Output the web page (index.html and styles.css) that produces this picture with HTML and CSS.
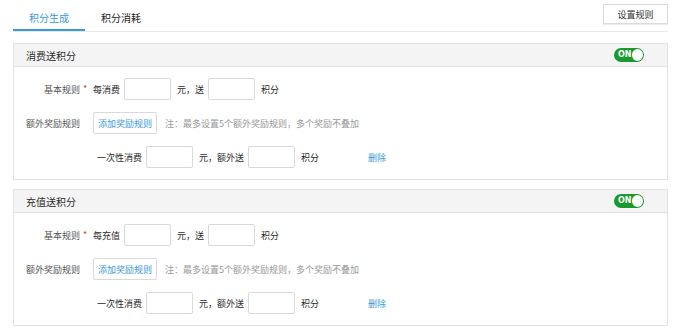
FILE: index.html
```html
<!DOCTYPE html>
<html lang="zh-CN">
<head>
  <meta charset="UTF-8" />
  <title>积分设置</title>
  <link rel="stylesheet" href="styles.css">
</head>
<body>
  <div class="page">
    <div class="tab-bar">
      <div class="tabs">
        <div class="tab active">积分生成</div>
        <div class="tab">积分消耗</div>
      </div>
      <button class="rule-btn">设置规则</button>
    </div>

    <div class="panel">
      <div class="panel-head">
        <span class="panel-title">消费送积分</span>
        <span class="switch"><span class="switch-text">ON</span><span class="knob"></span></span>
      </div>
      <div class="panel-body">
        <div class="row">
          <span class="label">基本规则</span><span class="mark">*</span>
          <span class="txt">每消费</span>
          <input class="num" type="text" />
          <span class="txt">元，送</span>
          <input class="num" type="text" />
          <span class="txt">积分</span>
        </div>
        <div class="row">
          <span class="label">额外奖励规则</span><span class="mark"></span>
          <button class="add-btn">添加奖励规则</button>
          <span class="note">注：最多设置5个额外奖励规则，多个奖励不叠加</span>
        </div>
        <div class="row sub">
          <span class="txt">一次性消费</span>
          <input class="num" type="text" />
          <span class="txt">元，额外送</span>
          <input class="num" type="text" />
          <span class="txt">积分</span>
          <a class="del" href="#">删除</a>
        </div>
      </div>
    </div>

    <div class="panel">
      <div class="panel-head">
        <span class="panel-title">充值送积分</span>
        <span class="switch"><span class="switch-text">ON</span><span class="knob"></span></span>
      </div>
      <div class="panel-body">
        <div class="row">
          <span class="label">基本规则</span><span class="mark">*</span>
          <span class="txt">每充值</span>
          <input class="num" type="text" />
          <span class="txt">元，送</span>
          <input class="num" type="text" />
          <span class="txt">积分</span>
        </div>
        <div class="row">
          <span class="label">额外奖励规则</span><span class="mark"></span>
          <button class="add-btn">添加奖励规则</button>
          <span class="note">注：最多设置5个额外奖励规则，多个奖励不叠加</span>
        </div>
        <div class="row sub">
          <span class="txt">一次性消费</span>
          <input class="num" type="text" />
          <span class="txt">元，额外送</span>
          <input class="num" type="text" />
          <span class="txt">积分</span>
          <a class="del" href="#">删除</a>
        </div>
      </div>
    </div>
  </div>
</body>
</html>
```

FILE: styles.css
```css
* {
  margin: 0;
  padding: 0;
  box-sizing: border-box;
  font-family: "Noto Sans CJK SC", "Noto Sans", sans-serif;
}

body {
  background: #fff;
  color: #2b2b2b;
  font-size: 9px;
}

.page {
  padding: 0 13px;
}

/* Tabs */
.tab-bar {
  display: flex;
  justify-content: space-between;
  align-items: flex-start;
  height: 32px;
  border-bottom: 1px solid #e8e8e8;
}

.tabs {
  display: flex;
}

.tab {
  width: 72px;
  height: 31px;
  padding-top: 11px;
  line-height: 14px;
  font-size: 10px;
  text-align: center;
  color: #222;
  border-bottom: 2px solid transparent;
}

.tab.active {
  color: #3a9ad9;
  border-bottom-color: #3a9ad9;
}

.rule-btn {
  margin-top: 4px;
  width: 65px;
  height: 20px;
  background: #fff;
  border: 1px solid #dcdcdc;
  box-shadow: 0 1px 1px rgba(0, 0, 0, 0.08);
  font-size: 9px;
  color: #333;
}

/* Panels */
.panel {
  margin-top: 11px;
  border: 1px solid #e3e3e3;
}

.panel + .panel {
  margin-top: 9px;
}

.panel-head {
  display: flex;
  justify-content: space-between;
  align-items: center;
  height: 23px;
  padding: 0 23px 0 12px;
  background: #f4f4f4;
  border-bottom: 1px solid #e3e3e3;
}

.panel-title {
  font-size: 10px;
  color: #2b2b2b;
}

.switch {
  display: flex;
  align-items: center;
  justify-content: space-between;
  width: 30px;
  height: 14px;
  padding: 1px 1px 1px 4px;
  border-radius: 7px;
  background: #1a9a2e;
}

.switch-text {
  font-family: "DejaVu Sans", sans-serif;
  font-size: 8px;
  font-weight: bold;
  color: #fff;
  line-height: 12px;
}

.knob {
  width: 12px;
  height: 12px;
  border-radius: 50%;
  background: #fff;
}

.panel-body {
  padding: 11px 0 11px;
}

.row {
  display: flex;
  align-items: center;
  height: 22px;
  margin-bottom: 12px;
}

.row:last-child {
  margin-bottom: 0;
}

.row.sub {
  padding-left: 83px;
}

.label {
  width: 66px;
  text-align: right;
  color: #555;
}

.mark {
  width: 13px;
  padding-left: 3px;
  color: #e0373d;
  line-height: 9px;
  align-self: flex-start;
  padding-top: 6px;
}

.txt {
  white-space: nowrap;
}

.num {
  width: 47px;
  height: 22px;
  margin: 0 6px 0 4px;
  border: 1px solid #d9d9d9;
  border-radius: 2px;
  background: #fff;
}

.add-btn {
  width: 64px;
  height: 22px;
  background: #fff;
  border: 1px solid #d9d9d9;
  border-radius: 2px;
  font-size: 9px;
  color: #3a9ad9;
}

.note {
  margin-left: 8px;
  color: #999;
  white-space: nowrap;
}

.del {
  margin-left: 49px;
  color: #3a9ad9;
  text-decoration: none;
}
```
